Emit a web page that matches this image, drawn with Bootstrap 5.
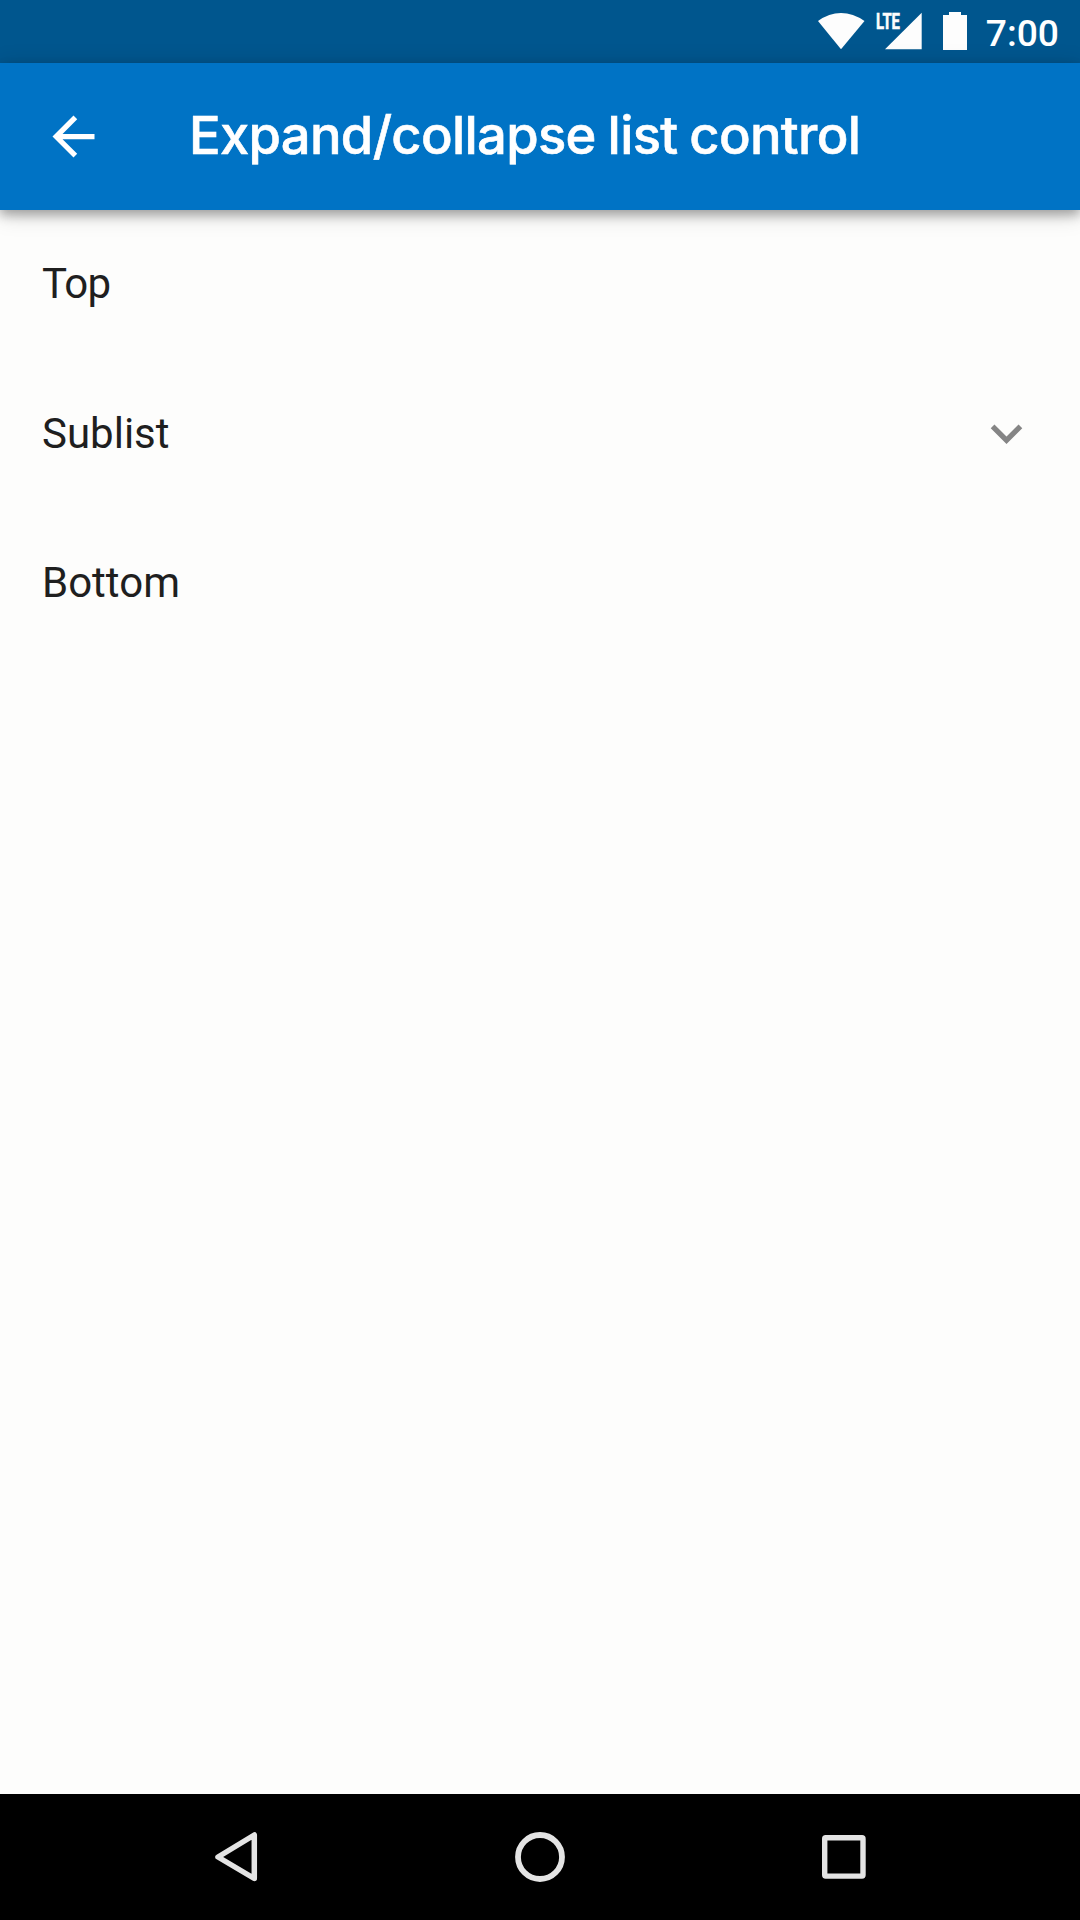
<!DOCTYPE html>
<html lang="en">
<head>
<meta charset="utf-8">
<meta name="viewport" content="width=device-width, initial-scale=1">
<title>Expand/collapse list control</title>
<link href="https://cdn.jsdelivr.net/npm/bootstrap@5.3.0/dist/css/bootstrap.min.css" rel="stylesheet">
<style>
body{background:#fdfdfc;font-family:Roboto,"Liberation Sans",sans-serif;overflow:hidden}
svg{display:block;flex:none}
.status-bar{height:63px;background:#00568e;padding-right:21px}
.status-bar .clock{font-size:37.2px;font-weight:500;line-height:1;margin-left:18px;padding-top:4px}
.app-bar{height:147px;background:#0073c5;padding:0 42px;box-shadow:0 5px 10px rgba(0,0,0,.28),0 4px 22px rgba(0,0,0,.18);z-index:1}
.app-title{font-family:Inter,Roboto,sans-serif;font-size:52.5px;font-weight:500;line-height:1;margin:0 0 0 84px;padding-bottom:2px;letter-spacing:-.68px;word-spacing:-1.5px;-webkit-text-stroke:.6px #fff;white-space:nowrap}
.list-row{height:149.5px;padding:0 42px;color:#1f1f1f;font-size:42px;line-height:1}
.list-area{margin-top:-.7px}
.tight-cap{letter-spacing:-.8px}
.system-nav{height:126px;background:#000}
</style>
</head>
<body>
<div class="d-flex flex-column vh-100">
  <div class="status-bar d-flex align-items-center justify-content-end text-white">
    <svg width="154" height="63" viewBox="814 0 154 63" fill="#fdfdfd">
      <path d="M818 21Q829 13 841 13T864.5 21L841 49.300z"/>
      <text x="876" y="29" font-family="Roboto" font-weight="700" font-size="21.500" textLength="24" lengthAdjust="spacingAndGlyphs" stroke="#fdfdfd" stroke-width=".6">LTE</text>
      <path d="M885 49.300L921.700 12.800V49.300z"/>
      <path d="M949 12h12v3h6v35h-24V15h6z"/>
    </svg>
    <span class="clock">7:00</span>
  </div>
  <header class="app-bar d-flex align-items-center text-white position-relative">
    <svg width="63" height="63" viewBox="0 0 24 24" fill="#fff"><path d="M20 11H7.830l5.590-5.590L12 4l-8 8 8 8 1.410-1.410L7.830 13H20z"/></svg>
    <h1 class="app-title">Expand/collapse list control</h1>
  </header>
  <main class="flex-grow-1 list-area">
    <ul class="list-unstyled mb-0">
      <li class="list-row d-flex align-items-center tight-cap">Top</li>
      <li class="list-row d-flex align-items-center justify-content-between">Sublist
        <svg width="63" height="63" viewBox="0 0 24 24" fill="#858585"><path d="M16.590 8.590L12 13.170 7.410 8.590 6 10l6 6 6-6z"/></svg>
      </li>
      <li class="list-row d-flex align-items-center">Bottom</li>
    </ul>
  </main>
  <nav class="system-nav">
    <svg width="1080" height="126" viewBox="0 1794 1080 126" fill="none" stroke="#e4e4e4" stroke-linejoin="round">
      <path d="M254.300 1835v43.500L218 1857z" stroke-width="5.500"/>
      <circle cx="540" cy="1857" r="22" stroke-width="5.800"/>
      <rect x="824.700" y="1837.800" width="38.300" height="38.300" rx="1" stroke-width="5.400"/>
    </svg>
  </nav>
</div>
<script src="https://cdn.jsdelivr.net/npm/bootstrap@5.3.0/dist/js/bootstrap.bundle.min.js"></script>
</body>
</html>
